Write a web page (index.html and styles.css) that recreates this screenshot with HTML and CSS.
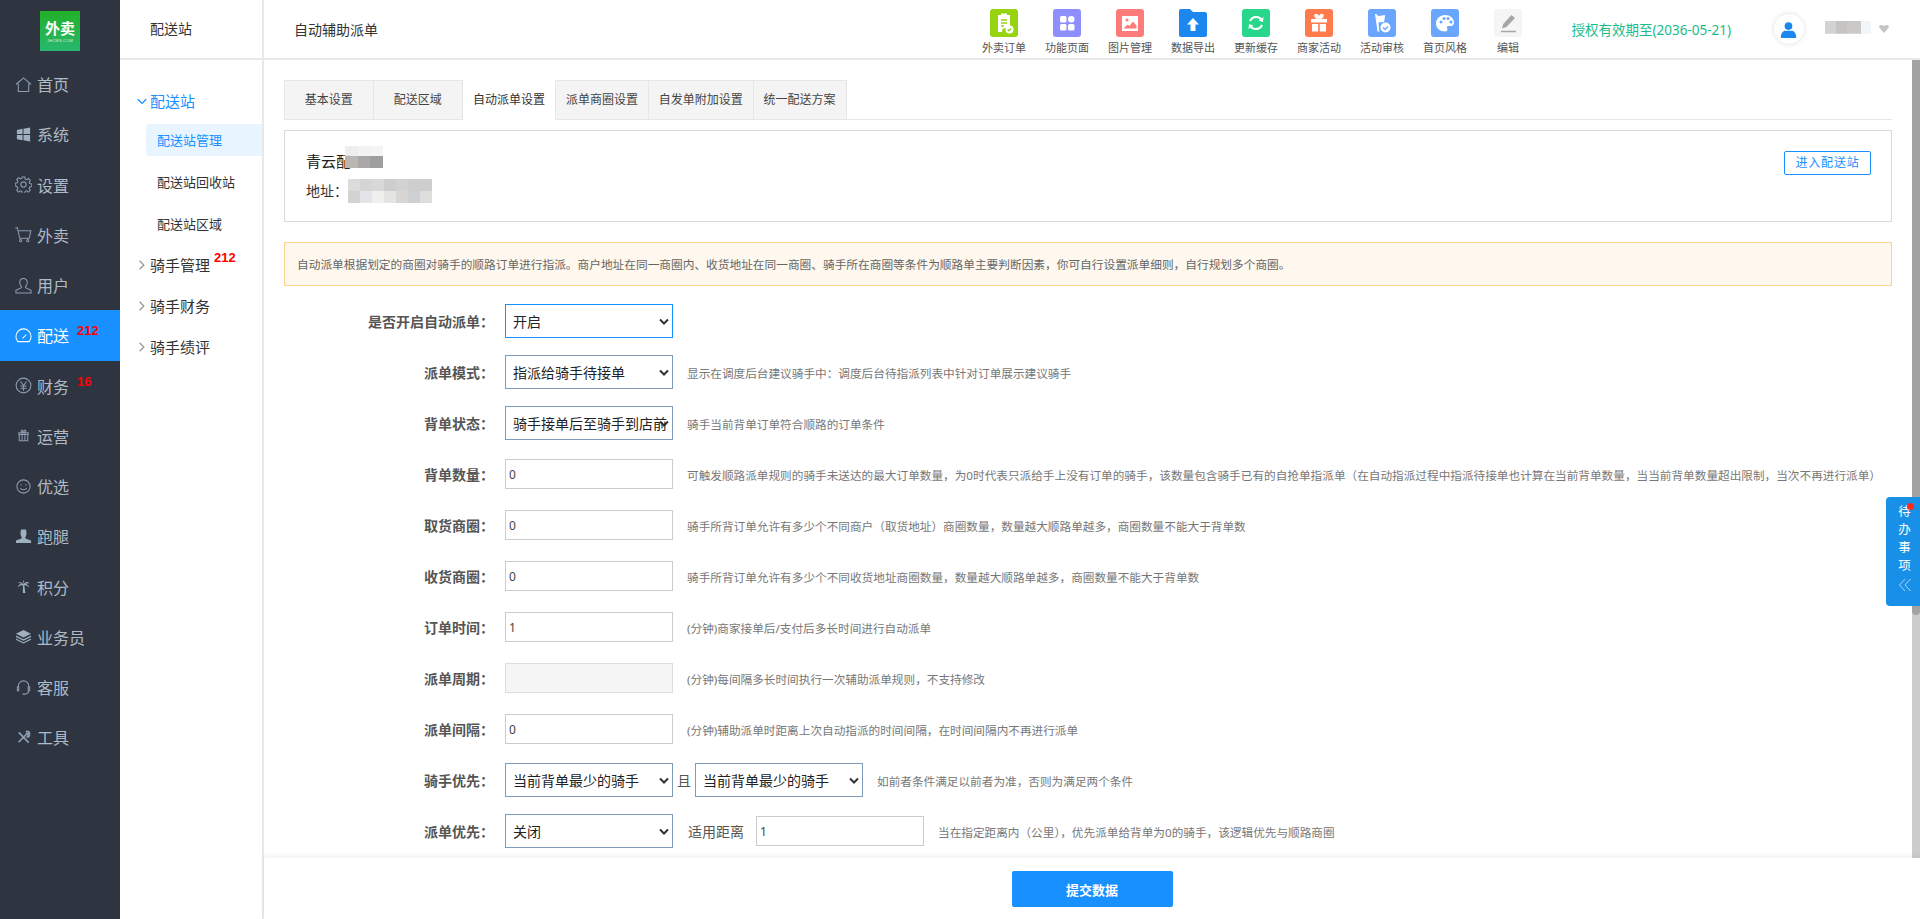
FILE: index.html
```html
<!DOCTYPE html>
<html lang="zh-CN">
<head>
<meta charset="utf-8">
<title>自动辅助派单</title>
<link rel="stylesheet" href="styles.css">
</head>
<body>
<nav class="rail">
  <div class="logo"><div class="logo-box"><span class="logo-cn">外卖</span><span class="logo-en">JHCMS.COM</span></div></div>
  <a class="rail-item"><svg class="ri" viewBox="0 0 18 18"><path d="M1 9 9 2l8 7M3.500 8v8.500h11V8"/></svg><span>首页</span></a>
  <a class="rail-item"><svg class="ri fill" viewBox="0 0 18 18"><path d="M2 4.200 8 3v5.500H2zM9 2.800 16 1.500v7H9zM2 9.500h6V15l-6-1zM9 9.500h7v7l-7-1.300z"/></svg><span>系统</span></a>
  <a class="rail-item"><svg class="ri" viewBox="0 0 18 18"><circle cx="9" cy="9" r="2.800"/><path d="M7.600 1h2.800l.4 2.300 1.500.6 1.900-1.300 2 2-1.300 1.900.6 1.500 2.300.4v2.800l-2.300.4-.6 1.500 1.300 1.900-2 2-1.900-1.300-1.500.6-.4 2.300H7.600l-.4-2.300-1.500-.6-1.900 1.300-2-2 1.300-1.900-.6-1.500L.2 10.400V7.600l2.300-.4.6-1.500L1.800 3.800l2-2 1.900 1.300 1.500-.6z"/></svg><span>设置</span></a>
  <a class="rail-item"><svg class="ri" viewBox="0 0 18 18"><path d="M.5 2h2l2.500 11h10L16.800 5H4"/><circle cx="6" cy="15.500" r="1.200"/><circle cx="13.500" cy="15.500" r="1.200"/></svg><span>外卖</span></a>
  <a class="rail-item"><svg class="ri" viewBox="0 0 18 18"><path d="M9 1.500c-2.400 0-4 1.800-4 4.300 0 1.900.8 3.300 1.800 4.200v1.300L1 14v3h16v-3l-5.800-2.700V10c1-.9 1.800-2.300 1.800-4.200 0-2.500-1.600-4.300-4-4.300z"/></svg><span>用户</span></a>
  <a class="rail-item active"><svg class="ri" viewBox="0 0 18 18"><path d="M3 15.500h12A8 8 0 0 0 17 10 8 8 0 0 0 1 10a8 8 0 0 0 2 5.500zM8 12l4-4"/></svg><span>配送</span><b class="badge">212</b></a>
  <a class="rail-item"><svg class="ri" viewBox="0 0 18 18"><circle cx="9" cy="9" r="7.800"/><path d="m5.800 4.800 3.200 4.200 3.200-4.200M5.800 9.500h6.400M5.800 12h6.400M9 9v5.500"/></svg><span>财务</span><b class="badge">16</b></a>
  <a class="rail-item"><svg class="ri" viewBox="0 0 18 18"><path d="M4.500 8h9v6.500h-9zM4 6h10v2H4zM7.500 6v8.500M10.500 6v8.500M7.500 6C6 4.500 6.500 3 8 3.500L9 6l1-2.500c1.500-.5 2 1 .5 2.500"/></svg><span>运营</span></a>
  <a class="rail-item"><svg class="ri" viewBox="0 0 18 18"><circle cx="9" cy="9" r="7"/><path d="M5.500 10.500c1.700 2.600 5.300 2.600 7 0M6.500 6.500v1.500M11.500 6.500v1.500"/></svg><span>优选</span></a>
  <a class="rail-item"><svg class="ri fill" viewBox="0 0 18 18"><path d="M6.300 1.500h5.400l.5 4c0 2-1 3.500-1.400 4.500 0 1.500 3.500 2 6.200 3.300V16H1v-2.700C3.700 12 7.200 11.500 7.200 10 6.800 9 5.800 7.500 5.800 5.500z"/></svg><span>跑腿</span></a>
  <a class="rail-item"><svg class="ri fill" viewBox="0 0 18 18"><path d="M8.500 7.500h1.200l1.300 8.500H8.300zM9 7C8 4.500 5 3.500 2.500 5.500 4.500 5.200 6 5.500 7 6.300 5 6.300 3.500 7.500 2.800 10 4.500 8.300 6.500 7.500 9 7.500c2.500 0 4.700 1 6.300 2.800C14.700 8 13 6.500 11 6.300c1.200-.8 2.700-1 4.500-.6C13.200 3.200 10 4.500 9 7zM9 6.500C8.500 4.500 8.500 3 9 2c.6 1 .6 2.500 0 4.500z"/></svg><span>积分</span></a>
  <a class="rail-item"><svg class="ri fill" viewBox="0 0 18 18"><path d="M9 2 17 6l-8 4-8-4zM1 8l8 4 8-4v1.500l-8 4-8-4zM1 11l8 4 8-4v1.500l-8 4-8-4z"/></svg><span>业务员</span></a>
  <a class="rail-item"><svg class="ri" viewBox="0 0 18 18"><path d="M3.500 9V7.500a5.500 5.500 0 0 1 11 0V9M2.500 8.500h1.500v4H2.500zM14 8.500h1.500v4H14zM14.500 12.500c0 2-1.500 3.500-4 3.500M8 16h2.500"/></svg><span>客服</span></a>
  <a class="rail-item"><svg class="ri thick" viewBox="0 0 18 18"><path d="M4 3.500 14.500 14.500M13 4.500 3.800 14M11.500 3.200c1.500-1.200 3.600-.7 3.800 1.200l-2 .3.400 1.500 1.600-.4c.4 1.800-1.500 3-3.200 2.200"/></svg><span>工具</span></a>
</nav>

<aside class="subnav">
  <div class="subnav-head">配送站</div>
  <div class="subnav-list">
    <div class="group open"><svg class="chev" viewBox="0 0 10 10"><path d="M1.500 3.500 5 7l3.500-3.500"/></svg>配送站</div>
    <a class="leaf current">配送站管理</a>
    <a class="leaf">配送站回收站</a>
    <a class="leaf">配送站区域</a>
    <div class="group"><svg class="chev" viewBox="0 0 10 10"><path d="M3 1.500 6.500 5 3 8.500"/></svg>骑手管理<b class="badge sub-badge">212</b></div>
    <div class="group"><svg class="chev" viewBox="0 0 10 10"><path d="M3 1.500 6.500 5 3 8.500"/></svg>骑手财务</div>
    <div class="group"><svg class="chev" viewBox="0 0 10 10"><path d="M3 1.500 6.500 5 3 8.500"/></svg>骑手绩评</div>
  </div>
</aside>

<div class="main">
  <header class="topbar">
    <div class="page-title">自动辅助派单</div>
    <div class="shortcuts">
      <a class="shortcut"><span class="sc-icon c-lime"><svg viewBox="0 0 28 28"><path class="w" d="M8 6h3V4.500h6V6h3v13h-6a4 4 0 0 0-2 4H8z"/><path class="cut" d="M11 11h6M11 14h6M11 17h3"/><circle class="w" cx="19.500" cy="20.500" r="4"/><path class="cut" d="m17.700 20.500 1.300 1.300 2.200-2.300"/></svg></span><span>外卖订单</span></a>
      <a class="shortcut"><span class="sc-icon c-violet"><svg viewBox="0 0 28 28"><rect class="w" x="7" y="7" width="6.500" height="6.500" rx="1.500"/><rect class="w" x="15" y="7" width="6.500" height="6.500" rx="3.200"/><rect class="w" x="7" y="15" width="6.500" height="6.500" rx="1.500"/><rect class="w" x="15" y="15" width="6.500" height="6.500" rx="1.500"/></svg></span><span>功能页面</span></a>
      <a class="shortcut"><span class="sc-icon c-red"><svg viewBox="0 0 28 28"><rect class="w" x="6" y="7" width="16" height="15"/><path d="M7.500 19.500h13v-3l-3.500-4-3.500 4.500-2-1.500z" fill="#ff7b7b"/><circle cx="11" cy="11" r="1.500" fill="#ff7b7b"/></svg></span><span>图片管理</span></a>
      <a class="shortcut"><span class="sc-folder"><svg viewBox="0 0 28 28"><path d="M0 2a2 2 0 0 1 2-2h9l3 3h12a2 2 0 0 1 2 2v21a2 2 0 0 1-2 2H2a2 2 0 0 1-2-2z" fill="#1c87ef"/><path class="w" d="m14 9 6 6.500h-3.500V22h-5v-6.500H8z"/></svg></span><span>数据导出</span></a>
      <a class="shortcut"><span class="sc-icon c-green"><svg viewBox="0 0 28 28"><path class="ws" d="M20 11.500A6.700 6.700 0 0 0 8 12M8 16.500a6.700 6.700 0 0 0 12-.5"/><path class="w" d="m21.500 8-.5 5-4.500-1.500zM6.500 20l.5-5 4.500 1.500z"/></svg></span><span>更新缓存</span></a>
      <a class="shortcut"><span class="sc-icon c-orange"><svg viewBox="0 0 28 28"><path class="w" d="M6 10h16v3.500H6zM7 15h6.200v7.500H7zM14.800 15H21v7.500h-6.200z"/><path class="ws" d="M13.500 9.500C11 9 9.500 7 10.500 6s3 1 3.500 3.500c.5-2.500 2.500-4.500 3.500-3.500s-.5 3-3 3.500"/></svg></span><span>商家活动</span></a>
      <a class="shortcut"><span class="sc-icon c-blue"><svg viewBox="0 0 28 28"><path class="w" d="M7 5h1.500l.8 1.500c3 1.200 4.500-.5 8-.2L16 13l-5.500.6.800 9H9.500z"/><circle class="w" cx="17.500" cy="18.500" r="5"/><path d="m15 18.500 2 2 3-3" fill="none" stroke="#6aa6ff" stroke-width="1.500"/></svg></span><span>活动审核</span></a>
      <a class="shortcut"><span class="sc-icon c-blue"><svg viewBox="0 0 28 28"><path class="w" d="M14 6c5 0 9 3.500 9 7.500 0 3-2.500 4-5 3.500-1.800-.3-2.500 1-1.800 2.500.7 1.700-.2 3-2.200 3-5 0-9-3.500-9-8s4-8.500 9-8.500z"/><circle cx="10" cy="13" r="1.500" fill="#6aa6ff"/><circle cx="13" cy="9.500" r="1.500" fill="#6aa6ff"/><circle cx="17" cy="9.500" r="1.500" fill="#6aa6ff"/><circle cx="20" cy="13" r="1.500" fill="#6aa6ff"/></svg></span><span>首页风格</span></a>
      <a class="shortcut"><span class="sc-icon c-grey"><svg viewBox="0 0 28 28"><path d="m17.500 6 3.500 3-8.500 9-4.500 1.500 1.200-4.500z" fill="#a6a6a6"/><path d="M7 22.500h15" stroke="#a6a6a6" stroke-width="1.500"/></svg></span><span>编辑</span></a>
    </div>
    <div class="license">授权有效期至(2036-05-21)</div>
    <div class="avatar"><svg viewBox="0 0 22 22"><circle cx="11" cy="6.500" r="5"/><path d="M1 21c0-5 3-8.500 6-8.500h8c3 0 6 3.500 6 8.500 0 .6-.4 1-1 1H2c-.6 0-1-.4-1-1z"/></svg></div>
    <div class="user-mosaic"></div>
    <svg class="caret" viewBox="0 0 10 8"><path d="M0 1.500C0 .5 1.500 0 2.500 0S5 1 5 1s1.500-1 2.500-1S10 .5 10 1.500 5 8 5 8 0 2.500 0 1.500z"/></svg>
  </header>

  <div class="pane">
    <div class="content">
      <div class="tabs">
        <a class="tab w89">基本设置</a>
        <a class="tab w89">配送区域</a>
        <a class="tab selected w93">自动派单设置</a>
        <a class="tab w93">派单商圈设置</a>
        <a class="tab w104">自发单附加设置</a>
        <a class="tab w93">统一配送方案</a>
      </div>
      <section class="info">
        <div class="info-text">
          <div class="info-name">青云配<span class="mosaic-name"></span></div>
          <div class="info-addr">地址：<span class="mosaic-addr"></span></div>
        </div>
        <a class="enter-btn">进入配送站</a>
      </section>
      <div class="notice">自动派单根据划定的商圈对骑手的顺路订单进行指派。商户地址在同一商圈内、收货地址在同一商圈、骑手所在商圈等条件为顺路单主要判断因素，你可自行设置派单细则，自行规划多个商圈。</div>
      <form class="form">
        <div class="row"><label class="lbl">是否开启自动派单：</label><select class="sel focus"><option>开启</option></select></div>
        <div class="row"><label class="lbl">派单模式：</label><select class="sel"><option>指派给骑手待接单</option></select><span class="hint">显示在调度后台建议骑手中：调度后台待指派列表中针对订单展示建议骑手</span></div>
        <div class="row"><label class="lbl">背单状态：</label><select class="sel"><option>骑手接单后至骑手到店前</option></select><span class="hint">骑手当前背单订单符合顺路的订单条件</span></div>
        <div class="row"><label class="lbl">背单数量：</label><input class="inp" value="0"><span class="hint">可触发顺路派单规则的骑手未送达的最大订单数量，为0时代表只派给手上没有订单的骑手，该数量包含骑手已有的自抢单指派单（在自动指派过程中指派待接单也计算在当前背单数量，当当前背单数量超出限制，当次不再进行派单）</span></div>
        <div class="row"><label class="lbl">取货商圈：</label><input class="inp" value="0"><span class="hint">骑手所背订单允许有多少个不同商户（取货地址）商圈数量，数量越大顺路单越多，商圈数量不能大于背单数</span></div>
        <div class="row"><label class="lbl">收货商圈：</label><input class="inp" value="0"><span class="hint">骑手所背订单允许有多少个不同收货地址商圈数量，数量越大顺路单越多，商圈数量不能大于背单数</span></div>
        <div class="row"><label class="lbl">订单时间：</label><input class="inp" value="1"><span class="hint">(分钟)商家接单后/支付后多长时间进行自动派单</span></div>
        <div class="row"><label class="lbl">派单周期：</label><input class="inp" disabled><span class="hint">(分钟)每间隔多长时间执行一次辅助派单规则，不支持修改</span></div>
        <div class="row"><label class="lbl">派单间隔：</label><input class="inp" value="0"><span class="hint">(分钟)辅助派单时距离上次自动指派的时间间隔，在时间间隔内不再进行派单</span></div>
        <div class="row"><label class="lbl">骑手优先：</label><select class="sel"><option>当前背单最少的骑手</option></select><span class="and">且</span><select class="sel"><option>当前背单最少的骑手</option></select><span class="hint">如前者条件满足以前者为准，否则为满足两个条件</span></div>
        <div class="row"><label class="lbl">派单优先：</label><select class="sel"><option>关闭</option></select><span class="range-label">适用距离</span><input class="inp" value="1"><span class="hint">当在指定距离内（公里），优先派单给背单为0的骑手，该逻辑优先与顺路商圈</span></div>
      </form>
    </div>
    <div class="scroll-track"><div class="scroll-thumb"></div></div>
  </div>

  <footer class="foot"><button class="submit" type="button">提交数据</button></footer>

  <aside class="todo">
    <i class="dot"></i>
    <span>待</span><span>办</span><span>事</span><span>项</span>
    <svg viewBox="0 0 14 14"><path d="M7 1 1.500 7 7 13M12.500 1 7 7l5.500 6"/></svg>
  </aside>
</div>
</body>
</html>
```

FILE: styles.css
```css
* { box-sizing: border-box; }
html, body { height: 100%; }
body {
  margin: 0;
  height: 919px;
  display: flex;
  overflow: hidden;
  font-family: "Noto Sans", "Noto Sans CJK SC", sans-serif;
  color: #333;
  background: #fff;
}
a { color: inherit; text-decoration: none; }

/* rail */
.rail { width: 120px; flex: none; background: #2e3540; color: #b0bac7; }
.logo { height: 59px; padding: 11px 0 0 40px; }
.logo-box {
  width: 40px; height: 40px;
  background: linear-gradient(#22b128, #27b86f);
  color: #fff;
  display: flex; flex-direction: column; align-items: center;
  padding-top: 8px;
}
.logo-cn { font-size: 15px; line-height: 18px; font-weight: 700; }
.logo-en { font-size: 4px; line-height: 7px; font-family: "Liberation Sans", sans-serif; opacity: .8; letter-spacing: .2px; }
.rail-item {
  height: 50.25px;
  display: flex; align-items: center;
  padding-left: 15px;
  font-size: 16px;
  position: relative;
}
.rail-item.active { background: #1890ff; color: #fff; }
.ri { width: 17px; height: 17px; margin-right: 5px; flex: none; fill: none; stroke: #8d9cb0; stroke-width: 1.1; }
.ri.fill { fill: #9fb0c0; stroke: none; }
.ri.thick { stroke-width: 1.8; }
.active .ri { stroke: #fff; }
.badge {
  font: 700 13px/14px "Liberation Sans", sans-serif;
  color: #f00;
  position: absolute; left: 77px; top: 14px;
}
.sub-badge { left: 78px; top: 7px; }

/* sub nav */
.subnav { width: 144px; flex: none; border-right: 2px solid #e8e8e8; }
.subnav-head {
  height: 60px; border-bottom: 2px solid #e8e8e8;
  padding-left: 30px; line-height: 58px; font-size: 14px;
}
.subnav-list { display: flex; flex-direction: column; padding-top: 17px; padding-left: 16px; }
.group { height: 41px; line-height: 40px; font-size: 15px; display: flex; align-items: center; position: relative; color: #333; }
.group.open { color: #1890ff; height: 47px; }
.leaf + .group { margin-top: -6px; }
.chev { width: 12px; height: 12px; margin-right: 2px; flex: none; fill: none; stroke: #999; stroke-width: 1.1; }
.open .chev { stroke: #1890ff; }
.leaf { height: 32px; margin: 0 0 10px 10px; padding-left: 11px; line-height: 32px; font-size: 13px; border-radius: 4px 0 0 4px; }
.leaf.current { background: #e8f4ff; color: #1890ff; }

/* main */
.main { flex: 1; min-width: 0; display: flex; flex-direction: column; position: relative; }
.topbar { height: 60px; flex: none; border-bottom: 2px solid #e8e8e8; display: flex; align-items: center; }
.page-title { font-size: 14px; padding-left: 30px; width: 708.5px; }
.shortcuts { display: flex; width: 600px; flex: none; }
.shortcut { width: 63px; flex: none; display: flex; flex-direction: column; align-items: center; font-size: 11px; line-height: 14px; color: #555; padding-top: 5px; }
.sc-icon, .sc-folder { width: 28px; height: 28px; margin-bottom: 4px; border-radius: 3px; display: block; }
.sc-icon svg, .sc-folder svg { display: block; width: 28px; height: 28px; }
.c-lime { background: #98d30f; }
.c-violet { background: #8e8fff; }
.c-red { background: #ff7b7b; }
.c-green { background: #28d68c; }
.c-orange { background: #ff7a4d; }
.c-blue { background: #6aa6ff; }
.c-grey { background: #f5f5f5; }
.w { fill: #fff; }
.ws { fill: none; stroke: #fff; stroke-width: 2; }
.cut { fill: none; stroke: #98d30f; stroke-width: 1.500; }
.license { font-size: 13.5px; color: #1abc8a; width: 193px; margin-left: -1px; flex: none; white-space: nowrap; }
.avatar {
  width: 30px; height: 30px; border-radius: 50%;
  box-shadow: 0 0 5px rgba(0, 0, 0, .14);
  margin-left: 9px; display: flex; align-items: center; justify-content: center; flex: none;
}
.avatar svg { width: 17px; height: 17px; fill: #1b87ef; }
.user-mosaic {
  width: 46px; height: 17px; margin-left: 21px; flex: none;
  background:
    linear-gradient(90deg, #d2d2d2 0 24%, #c6c3c3 24% 48%, #cbc8c8 48% 78%, #f2f5f9 78%) top / 100% 75% no-repeat;
}
.caret { width: 10px; height: 8px; margin-left: 8px; fill: #c4c4c4; flex: none; }

.pane { flex: 1; min-height: 0; display: flex; }
.content { flex: 1; min-width: 0; overflow: hidden; padding: 20px 20px 0; }
.scroll-track { width: 8px; flex: none; background: #ccc; }
.scroll-thumb { height: 555px; background: #a3a3a3; border-radius: 0 0 4px 4px; }

.tabs { display: flex; height: 40px; border-bottom: 1px solid #e6e6e6; }
.tab {
  height: 40px; font-size: 12px; line-height: 38px; text-align: center;
  background: #f4f4f4; border: 1px solid #e6e6e6; border-left-width: 0; color: #444;
}
.tab:first-child { border-left-width: 1px; }
.tab.selected { background: #fff; border-bottom-color: #fff; border-top-color: #fff; color: #333; }
.w89 { width: 89.5px; }
.w93 { width: 93px; }
.w104 { width: 104.5px; }

.info {
  margin-top: 10px; height: 92px;
  border: 1px solid #d9d9d9;
  display: flex; justify-content: space-between; align-items: center;
  padding: 0 20px 0 21px;
}
.info-name { font-size: 15px; line-height: 30px; color: #222; position: relative; }
.info-addr { font-size: 14px; line-height: 30px; position: relative; color: #333; }
.mosaic-name {
  position: absolute; left: 39px; top: 0; width: 38px; height: 22px;
  background:
    linear-gradient(90deg, #eee 0 33%, #f2f2f2 33% 66%, #f4f4f4 66%) top / 100% 45% no-repeat,
    linear-gradient(90deg, #b9b6b2 0 33%, #a9a7a7 33% 66%, #9e9e9e 66%) bottom / 100% 55% no-repeat;
}
.mosaic-addr {
  position: absolute; left: 42px; top: 3px; width: 84px; height: 24px;
  background:
    linear-gradient(90deg, #dcdcdc 0 14%, #d5d5d5 14% 28%, #d8d8d8 28% 43%, #cdcdcd 43% 57%, #d2d2d2 57% 71%, #cecece 71%) top / 100% 50% no-repeat,
    linear-gradient(90deg, #d3d3d3 0 14%, #e3e4e7 14% 28%, #f0f0ee 28% 43%, #e4e4e2 43% 57%, #d7d6d3 57% 71%, #cfd0d3 71% 86%, #dddddb 86%) bottom / 100% 50% no-repeat;
}
.enter-btn {
  align-self: flex-start;
  width: 87px; height: 24px; line-height: 22px; text-align: center;
  border: 1px solid #1890ff; border-radius: 2px; color: #1890ff; font-size: 12px;
  letter-spacing: .8px;
  margin-top: 20px;
}
.notice {
  margin-top: 20px; height: 44px; line-height: 42px;
  background: #fff8ee; border: 1px solid #fbd38d;
  padding-left: 12px; font-size: 11.7px; color: #666;
  white-space: nowrap;
}
.form { display: flex; flex-direction: column; gap: 17px; padding-top: 18px; }
.row { display: flex; align-items: center; height: 34px; font-size: 14px; }
.lbl { width: 210px; margin-right: 11px; flex: none; text-align: right; font-size: 14px; font-weight: 700; color: #555; }
.sel {
  appearance: none;
  width: 168px; height: 34px; flex: none;
  font: 14px "Noto Sans", "Noto Sans CJK SC", sans-serif; color: #222;
  border: 1px solid #7f9db9; border-radius: 0;
  background: #fff url("data:image/svg+xml,%3Csvg xmlns='http://www.w3.org/2000/svg' viewBox='0 0 10 7'%3E%3Cpath d='M1 1.500 5 5.500 9 1.500' fill='none' stroke='%23333' stroke-width='2'/%3E%3C/svg%3E") no-repeat 153px center / 10px 7px;
  padding: 0 0 0 7px;
}
.sel.focus { border-color: #1890ff; }
.inp {
  width: 168px; height: 30px; flex: none;
  font: 12px "Noto Sans", sans-serif; color: #444;
  border: 1px solid #ccc; border-radius: 0; background: #fff; padding: 0 3px; outline: none;
}
.inp:disabled { background: #f5f5f5; border-color: #ddd; }
.hint { margin-left: 14px; font-size: 11.65px; color: #777; white-space: nowrap; }
.and { width: 22px; text-align: center; font-size: 14px; color: #555; flex: none; }
.range-label { margin: 0 12px 0 15px; color: #555; font-size: 14px; flex: none; }

.foot {
  height: 61px; flex: none; background: #fff;
  display: flex; justify-content: center; align-items: flex-start; padding-top: 13px;
  box-shadow: 0 -3px 5px rgba(0, 0, 0, .05);
  position: relative;
}
.submit {
  width: 161px; height: 36px; border: 0; border-radius: 2px;
  background: #1890ff; color: #fff; font: 700 13px "Noto Sans", "Noto Sans CJK SC", sans-serif;
}

.todo {
  position: absolute; right: 0; top: 497px; width: 34px; height: 109px;
  background: #1890e8; border-radius: 4px 0 0 4px; color: #fff;
  display: flex; flex-direction: column; align-items: center;
  font-size: 12.5px; line-height: 18px; padding: 6px 0 0 3px;
}
.todo svg { width: 14px; height: 14px; margin-top: 3px; fill: none; stroke: #a9d4fa; stroke-width: 1; }
.dot { position: absolute; left: 21px; top: 6px; width: 7px; height: 7px; border-radius: 50%; background: #ff2a1a; }
```
